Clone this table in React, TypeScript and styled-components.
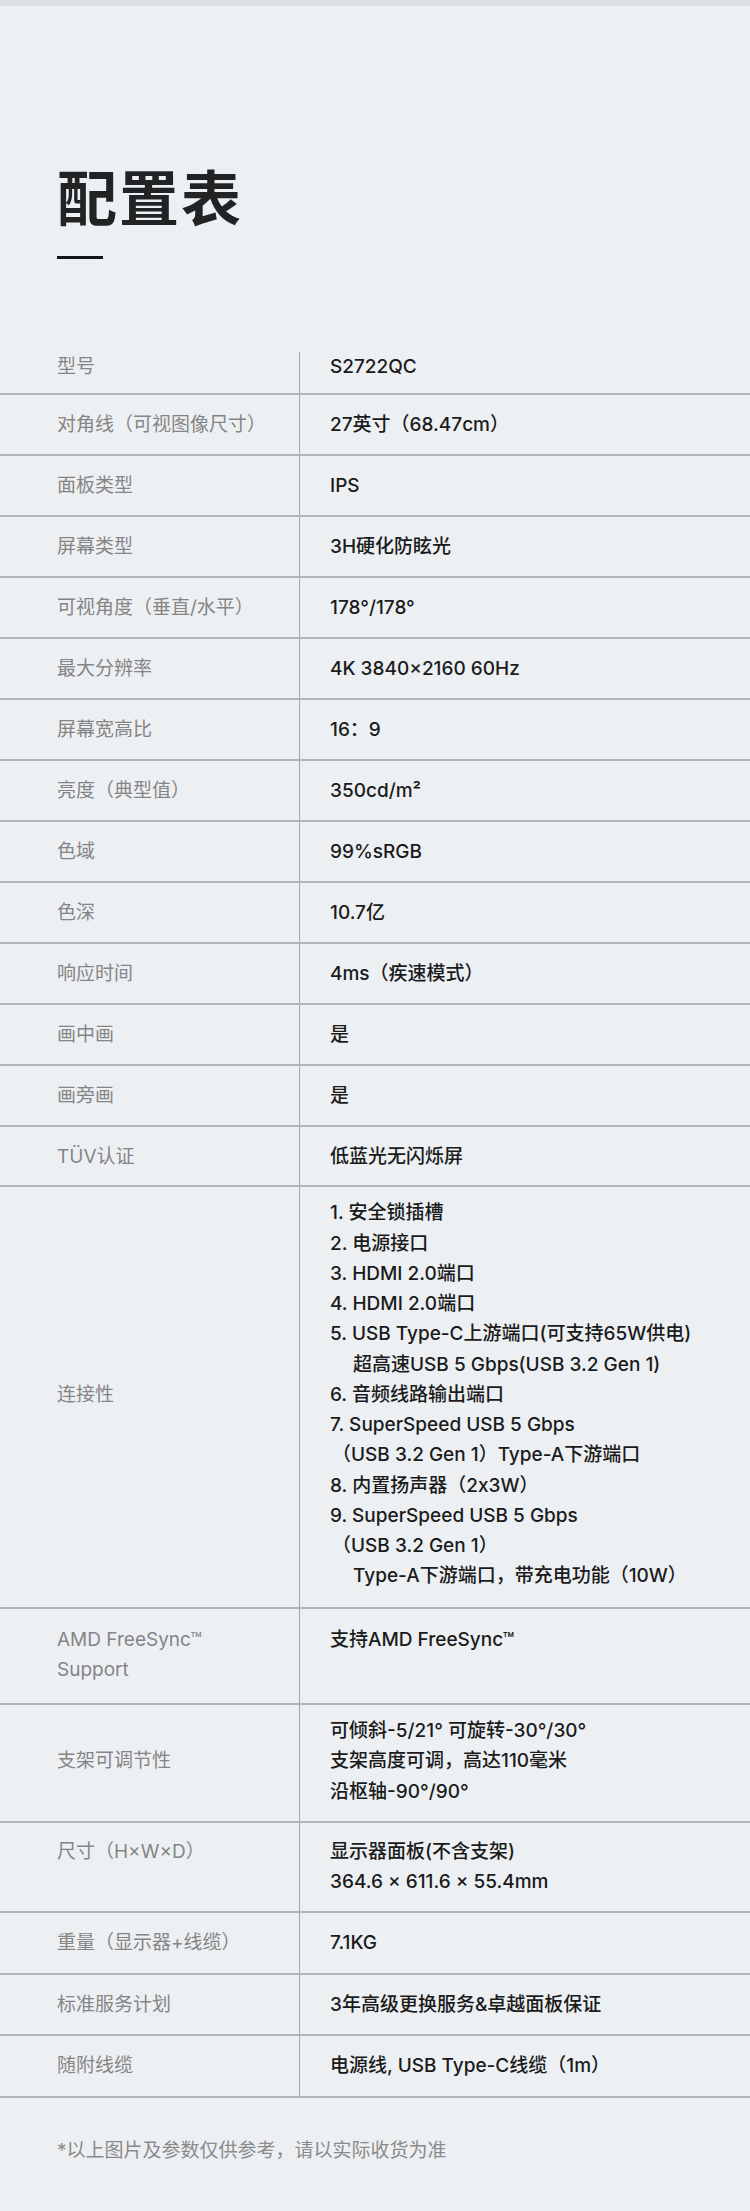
import React from "react";
import styled, { createGlobalStyle } from "styled-components";

const Global = createGlobalStyle`
  html, body { margin: 0; padding: 0; background: #edf0f3; }
  body { font-family: Inter, "Noto Sans CJK SC", sans-serif; }
`;

const Page = styled.div`
  background: #edf0f3;
  min-height: 2211px;
  box-sizing: border-box;
`;

const TopBar = styled.div`
  height: 6px;
  background: #dde1e4;
`;

const Header = styled.header`
  padding: 159px 0 0 57px;
`;

const Title = styled.h1`
  margin: 0;
  font-family: "Noto Sans CJK SC", sans-serif;
  font-size: 60px;
  line-height: 60px;
  font-weight: 700;
  letter-spacing: 2px;
  color: #222324;
`;

const Dash = styled.div`
  width: 46px;
  height: 3px;
  margin-top: 31px;
  background: #141414;
`;

const Table = styled.div`
  margin-top: 93px;
`;

const Row = styled.div<{ $top?: number; $bottom?: number }>`
  display: grid;
  grid-template-columns: 299px 1fr;
  border-bottom: 2px solid #b3b6b9;
  font-size: 19px;
  line-height: 30.25px;
  & > * {
    padding-top: ${(p) => p.$top ?? 15}px;
    padding-bottom: ${(p) => p.$bottom ?? 13.7}px;
  }
`;

const Label = styled.div<{ $center?: boolean }>`
  padding-left: 57px;
  color: #858585;
  align-self: ${(p) => (p.$center ? "center" : "start")};
`;

const Value = styled.div`
  border-left: 1px solid #a3a6a9;
  padding-left: 30px;
  padding-right: 16px;
  color: #1b1b1b;
  font-weight: 500;
`;

const Line = styled.div<{ $indent?: number }>`
  padding-left: ${(p) => p.$indent ?? 0}px;
  white-space: nowrap;
`;

const Footnote = styled.p`
  margin: 38px 0 0 57px;
  font-size: 19px;
  line-height: 30px;
  color: #8a8a8a;
`;

type Spec = {
  label: React.ReactNode;
  lines: { text: string; indent?: number }[];
  top?: number;
  bottom?: number;
  center?: boolean;
};

const simple = (label: string, value: string, bottom?: number): Spec => ({
  label,
  lines: [{ text: value }],
  bottom,
});

const specs: Spec[] = [
  { label: "型号", lines: [{ text: "S2722QC" }], top: 0, bottom: 11 },
  simple("对角线（可视图像尺寸）", "27英寸（68.47cm）"),
  simple("面板类型", "IPS"),
  simple("屏幕类型", "3H硬化防眩光"),
  simple("可视角度（垂直/水平）", "178°/178°"),
  simple("最大分辨率", "4K 3840×2160 60Hz"),
  simple("屏幕宽高比", "16：9"),
  simple("亮度（典型值）", "350cd/m²"),
  simple("色域", "99%sRGB"),
  simple("色深", "10.7亿"),
  simple("响应时间", "4ms（疾速模式）"),
  simple("画中画", "是"),
  simple("画旁画", "是"),
  simple("TÜV认证", "低蓝光无闪烁屏"),
  {
    label: "连接性",
    center: true,
    top: 11,
    bottom: 15,
    lines: [
      { text: "1. 安全锁插槽" },
      { text: "2. 电源接口" },
      { text: "3. HDMI 2.0端口" },
      { text: "4. HDMI 2.0端口" },
      { text: "5. USB Type-C上游端口(可支持65W供电)" },
      { text: "超高速USB 5 Gbps(USB 3.2 Gen 1)", indent: 23 },
      { text: "6. 音频线路输出端口" },
      { text: "7. SuperSpeed USB 5 Gbps" },
      { text: "（USB 3.2 Gen 1）Type-A下游端口", indent: 2 },
      { text: "8. 内置扬声器（2x3W）" },
      { text: "9. SuperSpeed USB 5 Gbps" },
      { text: "（USB 3.2 Gen 1）", indent: 2 },
      { text: "Type-A下游端口，带充电功能（10W）", indent: 23 },
    ],
  },
  {
    label: (
      <>
        AMD FreeSync™
        <br />
        Support
      </>
    ),
    top: 16,
    bottom: 18,
    lines: [{ text: "支持AMD FreeSync™" }],
  },
  {
    label: "支架可调节性",
    center: true,
    top: 11,
    bottom: 14,
    lines: [
      { text: "可倾斜-5/21° 可旋转-30°/30°" },
      { text: "支架高度可调，高达110毫米" },
      { text: "沿枢轴-90°/90°" },
    ],
  },
  {
    label: "尺寸（H×W×D）",
    top: 14,
    bottom: 13.5,
    lines: [{ text: "显示器面板(不含支架)" }, { text: "364.6 x 611.6 x 55.4mm" }],
  },
  simple("重量（显示器+线缆）", "7.1KG", 14.4),
  simple("标准服务计划", "3年高级更换服务&卓越面板保证", 14.4),
  simple("随附线缆", "电源线, USB Type-C线缆（1m）", 14.4),
];

export default function App() {
  return (
    <Page>
      <Global />
      <TopBar />
      <Header>
        <Title>配置表</Title>
        <Dash />
      </Header>
      <Table>
        {specs.map((s, i) => (
          <Row key={i} $top={s.top} $bottom={s.bottom}>
            <Label $center={s.center}>{s.label}</Label>
            <Value>
              {s.lines.map((l, j) => (
                <Line key={j} $indent={l.indent}>
                  {l.text}
                </Line>
              ))}
            </Value>
          </Row>
        ))}
      </Table>
      <Footnote>*以上图片及参数仅供参考，请以实际收货为准</Footnote>
    </Page>
  );
}
